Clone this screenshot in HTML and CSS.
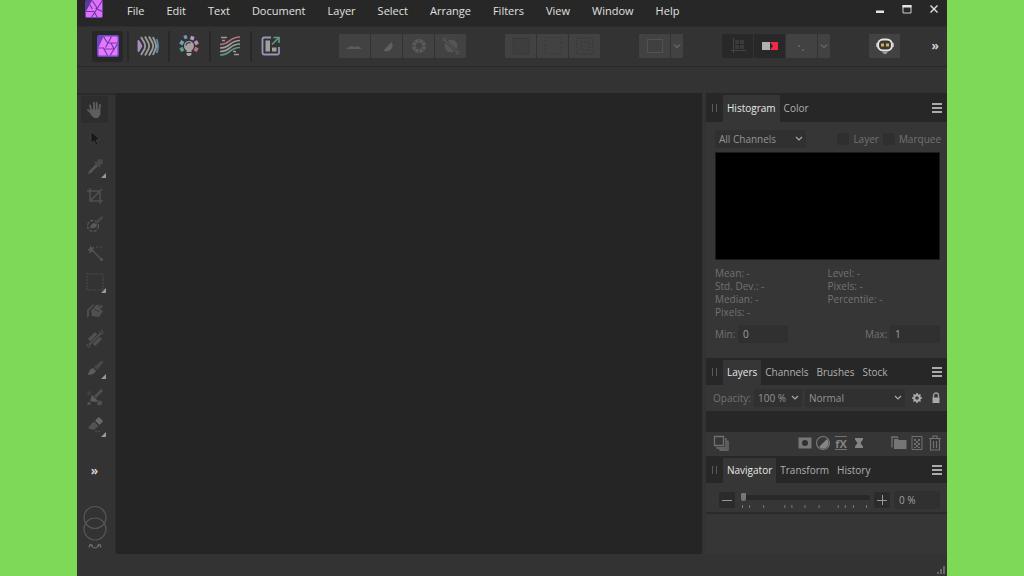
FILE: index.html
```html
<!DOCTYPE html>
<html lang="en">

<head>
    <meta charset="UTF-8">
    <meta name="viewport" content="width=device-width, initial-scale=1.0">
    <title>Photo Editor</title>
    <link rel="stylesheet" href="styles.css">
</head>

<body>
    <div class="app">
        <!-- Menu bar -->
        <header class="menubar">
            <svg class="logo" viewBox="0 0 22 22" width="18" height="18">
                <rect width="22" height="22" rx="2" fill="#5b3a9e"/>
                <path d="M9 0h11a1 1 0 0 1 1 1v19a1 1 0 0 1-1 1H2a1 1 0 0 1-1-1v-6z" fill="#e070f8"/>
                <path d="M9 1l6 9M1 14h10M21 1L8 21M21 14l-8-4M11 14l4 7M6 6l3 5" fill="none" stroke="#6a35a8" stroke-width="1.3"/>
            </svg>
            <nav class="menu">
                <a href="#">File</a>
                <a href="#">Edit</a>
                <a href="#">Text</a>
                <a href="#">Document</a>
                <a href="#">Layer</a>
                <a href="#">Select</a>
                <a href="#">Arrange</a>
                <a href="#">Filters</a>
                <a href="#">View</a>
                <a href="#">Window</a>
                <a href="#">Help</a>
            </nav>
            <div class="window-buttons">
                <button aria-label="Minimize"><svg viewBox="0 0 10 10" width="10" height="10"><path d="M1 6.5h8v2.5H1z" fill="#e4e4e4"/></svg></button>
                <button aria-label="Maximize"><svg viewBox="0 0 10 10" width="10" height="10"><path d="M1 1.5h8v7.5H1z" fill="none" stroke="#cfcfcf"/><path d="M.5 1h9v2.500h-9z" fill="#e4e4e4"/></svg></button>
                <button aria-label="Close"><svg viewBox="0 0 10 10" width="10" height="10"><path d="M1.500 1.500l7 7M8.500 1.500l-7 7" fill="none" stroke="#e4e4e4" stroke-width="1.400"/></svg></button>
            </div>
        </header>

        <!-- Toolbar -->
        <div class="toolbar">
            <div class="personas">
                <button class="persona active" aria-label="Photo Persona">
                    <svg viewBox="0 0 22 22" width="22" height="22">
                        <rect width="22" height="22" rx="2" fill="#6c45c0"/>
                        <path d="M6.500 1.500h13a1 1 0 0 1 1 1v17a1 1 0 0 1-1 1h-17a1 1 0 0 1-1-1v-7z" fill="#e579fa"/>
                        <path d="M6.500 1.500l4 6.500M14.500 1.500l-6 11M10.500 8h10M14 8l3 6M20.500 9l-7.500 11.500M17 14H6.500M1.500 13h5l4 7.500" fill="none" stroke="#7138b5" stroke-width="1.200"/>
                    </svg>
                </button>
                <button class="persona" aria-label="Liquify Persona">
                    <svg viewBox="0 0 22 22" width="22" height="22" fill="none" stroke-width="1.900">
                        <path d="M1.500 6l3 5-3 5z" fill="#a98cc0" stroke="#a98cc0" stroke-linejoin="round"/>
                        <path d="M4 2l3.500 6q1.500 3 0 6L4 20M8 1.500l3.500 6.500q1.500 3 0 6L8 20.500M12 1.500l3.500 6.500q1.500 3 0 6L12 20.500M16 2l2.500 6q1.500 3 0 6L16 20" stroke="#9a9a9a"/>
                        <path d="M19.500 4q3 7 0 14" stroke="#5c8ba6"/>
                    </svg>
                </button>
                <button class="persona" aria-label="Develop Persona">
                    <svg viewBox="0 0 22 22" width="22" height="22" fill="none" stroke-width="3.600">
                        <path d="M6 2.700l3-1.200" stroke="#7f8fc0"/>
                        <path d="M12.500 2.500l3.500 1.300" stroke="#b79ad0"/>
                        <path d="M2.800 9.500l2-3.500" stroke="#6aa5bb"/>
                        <path d="M19.300 9.500l-2-3.500" stroke="#c08bb0"/>
                        <path d="M3 12.500l1.800 3.800" stroke="#5c9c85"/>
                        <path d="M19 12.500l-1.800 3.800" stroke="#b8737a"/>
                        <circle cx="11" cy="11" r="5" fill="#a2a2a2" stroke="none"/>
                        <path d="M8 10.500a3 3 0 0 1 4.500-2.500" stroke="#393939" stroke-width="1.300"/>
                        <path d="M8.500 14h5v3h-5zM8.500 18h5v1.500l-1.500 1.500h-2l-1.500-1.500z" fill="#a2a2a2" stroke="none"/>
                    </svg>
                </button>
                <button class="persona" aria-label="Tone Mapping Persona">
                    <svg viewBox="0 0 22 22" width="22" height="22" fill="none" stroke-width="1.700">
                        <path d="M2 2.500h6M3 5.500h3M14 16.500h3M15 19.500h5" stroke="#9a9a9a"/>
                        <path d="M1 9.500c10 0 9-7.500 20-7.500" stroke="#b5737a"/>
                        <path d="M1 13c11 0 9-7.500 20-7.500M1 16.500c11 0 9-7.500 20-7.500" stroke="#999"/>
                        <path d="M1 20c11 0 9-7.500 20-7.500" stroke="#5f967b"/>
                    </svg>
                </button>
                <button class="persona" aria-label="Export Persona">
                    <svg viewBox="0 0 22 22" width="22" height="22" fill="none">
                        <path d="M11 2.500H4a1.500 1.500 0 0 0-1.500 1.500v14A1.500 1.500 0 0 0 4 19.500h13.500a1.500 1.500 0 0 0 1.500-1.500v-6" stroke="#9497b8" stroke-width="1.800"/>
                        <path d="M5.500 5.500h4.500v11H5.500zM12 12.500h4.500v4H12z" fill="#a0a0a0"/>
                        <path d="M12 9.500l6.500-6.500M13.500 2.500H19V8" stroke="#619a80" stroke-width="1.600"/>
                    </svg>
                </button>
            </div>

            <div class="groups">
                <div class="group">
                    <button aria-label="Auto Levels"><svg viewBox="0 0 18 18" width="18" height="18"><path d="M1 11l4-2 4 1 3-1 4 3H1z" fill="#5b5b5b"/></svg></button>
                    <button aria-label="Auto Contrast"><svg viewBox="0 0 18 18" width="18" height="18"><circle cx="9" cy="9" r="5.500" fill="#424242"/><path d="M13.500 5a6 6 0 0 1-8 8.500z" fill="#606060"/></svg></button>
                    <button aria-label="Auto Colors"><svg viewBox="0 0 18 18" width="18" height="18" fill="none"><circle cx="9" cy="9" r="5" stroke="#5b5b5b" stroke-width="4"/><path d="M9 2v4M9 12v4M2 9h4M12 9h4M4 4l3 3M14 4l-3 3M4 14l3-3M14 14l-3-3" stroke="#424242"/></svg></button>
                    <button aria-label="Auto White Balance"><svg viewBox="0 0 18 18" width="18" height="18" fill="none"><circle cx="9" cy="9" r="6.500" fill="#555"/><path d="M2 2l14 14" stroke="#424242" stroke-width="3"/><path d="M3 3l12 12" stroke="#5b5b5b"/><circle cx="2.500" cy="2.500" r="1.500" stroke="#5b5b5b"/><circle cx="15.500" cy="15.500" r="1.500" stroke="#5b5b5b"/></svg></button>
                </div>
                <div class="group">
                    <button aria-label="Select All"><svg viewBox="0 0 18 18" width="18" height="18"><rect x="1" y="1" width="16" height="16" fill="#3e3e3e" stroke="#363636" stroke-dasharray="2 1"/></svg></button>
                    <button aria-label="Deselect"><svg viewBox="0 0 18 18" width="18" height="18"><rect x="1" y="1" width="16" height="16" fill="none" stroke="#383838" stroke-dasharray="2 2"/></svg></button>
                    <button aria-label="Invert Selection"><svg viewBox="0 0 18 18" width="18" height="18" fill="none" stroke="#363636" stroke-dasharray="2 1"><rect x="1" y="1" width="16" height="16"/><rect x="5" y="5" width="8" height="8"/></svg></button>
                </div>
                <div class="group">
                    <button aria-label="Quick Mask"><svg viewBox="0 0 18 18" width="18" height="18"><rect x="1.500" y="2.500" width="15" height="13" fill="#404040" stroke="#525252"/></svg></button>
                    <button class="drop" aria-label="Quick Mask options"><svg viewBox="0 0 8 8" width="8" height="8"><path d="M1 2.500l3 3 3-3" fill="none" stroke="#858585"/></svg></button>
                </div>
                <div class="group">
                    <button class="dark" aria-label="Force Pixel Alignment"><svg viewBox="0 0 18 18" width="18" height="18"><path d="M4.500 1v15M2 13.500h15" stroke="#444" fill="none"/><path d="M6 3h4v4H6zM11 3h4v4h-4zM6 8h4v4H6zM11 8h4v4h-4z" fill="#3a3a3a"/></svg></button>
                    <button class="dark" aria-label="Snapping"><svg viewBox="0 0 18 10" width="18" height="10"><path d="M1 1h8v8H1z" fill="#b0b0b0"/><path d="M9 1h8v8H9l3-4z" fill="#f02b48"/></svg></button>
                    <button aria-label="Snapping Options"><svg viewBox="0 0 18 18" width="18" height="18"><path d="M5 8h2v2H5zM9 12h2v2H9z" fill="#5c5c5c"/></svg></button>
                    <button class="drop" aria-label="Snapping presets"><svg viewBox="0 0 8 8" width="8" height="8"><path d="M1 2.500l3 3 3-3" fill="none" stroke="#858585"/></svg></button>
                </div>
                <div class="group">
                    <button aria-label="Assistant">
                        <svg viewBox="0 0 18 18" width="18" height="18"><rect x="2" y="2.500" width="14" height="11" rx="5" fill="#3a3832" stroke="#e5e5e5" stroke-width="2"/><path d="M1 6v4M17 6v4" stroke="#d0d0d0" stroke-width="1.500"/><path d="M5 6.500h3v3H5zM10 6.500h3v3h-3z" fill="#d3ae52"/><path d="M6 15h6l-2 2H8z" fill="#999"/></svg>
                    </button>
                </div>
            </div>
            <button class="overflow" aria-label="More toolbar items">»</button>
        </div>

        <div class="context-bar"></div>

        <div class="workspace">
            <!-- Tools -->
            <aside class="tools">
                <div class="tool-list">
                    <button class="tool active" aria-label="View Tool"><svg viewBox="0 0 18 18" width="18" height="18" fill="none" stroke="#5e5e5e" stroke-width="1.900" stroke-linecap="round"><path d="M5.500 10L4 4.500M8 9V2M10.700 9V2M13 10l1-6M5.500 12L2 9"/><path d="M5.500 9.500h8v4l-2 2.500H8.500L5.500 13z" fill="#5e5e5e"/></svg></button>
                    <button class="tool" aria-label="Move Tool"><svg viewBox="0 0 18 18" width="18" height="18"><path d="M5 2.500v12l3-2.500 2 4 2-1-2-4 4-.5z" fill="#181818" stroke="#515151" stroke-width=".5"/></svg></button>
                    <button class="tool more" aria-label="Colour Picker Tool"><svg viewBox="0 0 18 18" width="18" height="18" fill="none"><path d="M2 16l1-3 7-7 2 2-7 7z" fill="#555"/><path d="M9 4l5 5M11.500 6.500l3-3" stroke="#4a4a4a" stroke-width="2"/><circle cx="14" cy="4" r="3" fill="#484848"/></svg></button>
                    <button class="tool" aria-label="Crop Tool"><svg viewBox="0 0 18 18" width="18" height="18" fill="none" stroke="#505050" stroke-width="1.500"><path d="M4 1v13h13M1 4h13v13M4 14L16 2"/></svg></button>
                    <button class="tool" aria-label="Selection Brush Tool"><svg viewBox="0 0 18 18" width="18" height="18"><circle cx="7" cy="11" r="5.500" fill="none" stroke="#5a5a5a" stroke-width="1.300" stroke-dasharray="3 1.500"/><path d="M4 13q1-5 5-5l2 2q-1 4-7 3z" fill="#595959"/><path d="M9 7l7-6q1.500 0 1 2l-6 6z" fill="#494949"/></svg></button>
                    <button class="tool" aria-label="Flood Select Tool"><svg viewBox="0 0 18 18" width="18" height="18"><path d="M4 1l1.500 2.500 3-.5L7 5.500 8.500 8l-3-.5L3.500 10V7L1 5.500l3-1z" fill="#555"/><path d="M6 6l9 9" stroke="#505050" stroke-width="1.500"/><circle cx="15.500" cy="15.500" r="1.500" fill="#555"/><path d="M10 3h2M14 3h2" stroke="#484848" stroke-width="1.500"/></svg></button>
                    <button class="tool more" aria-label="Marquee Tool"><svg viewBox="0 0 18 18" width="18" height="18"><rect x="1" y="1" width="16" height="16" fill="none" stroke="#4a4a4a" stroke-dasharray="2 1"/></svg></button>
                    <button class="tool" aria-label="Flood Fill Tool"><svg viewBox="0 0 18 18" width="18" height="18"><path d="M1 16V8l6-6 1 1-5 6v5z" fill="#4d4d4d"/><path d="M5 9l5-6q5-1 7 1-1 3-4 3l4 2-4 6-7-1z" fill="#505050"/><path d="M8 7l5 3M12 4h3" stroke="#353535" fill="none"/></svg></button>
                    <button class="tool" aria-label="Healing Tool"><svg viewBox="0 0 18 18" width="18" height="18"><path d="M2.500 9L9 2.500l2.500 2.500L5 11.500zM6.500 13L13 6.500 15.500 9 9 15.500z" fill="#525252" stroke="#525252" stroke-linejoin="round"/><path d="M3.500 14.500l11-11" stroke="#353535" stroke-width="3.200"/><path d="M3.500 14.500l11-11" stroke="#555" stroke-width="1.200"/><circle cx="15.500" cy="2.500" r="1.500" fill="none" stroke="#555"/><circle cx="2.500" cy="15.500" r="1.500" fill="none" stroke="#555"/></svg></button>
                    <button class="tool more" aria-label="Paint Brush Tool"><svg viewBox="0 0 18 18" width="18" height="18"><path d="M2 16q1-6 5-7l3 3q-2 4-8 4z" fill="#5c5c5c"/><path d="M8 8l7-6q2.500-.5 2 2l-6 7z" fill="#484848"/></svg></button>
                    <button class="tool" aria-label="Clone Brush Tool"><svg viewBox="0 0 18 18" width="18" height="18"><path d="M6 7l6 6-3 1-5-1 1-3z" fill="#5c5c5c"/><path d="M8 8l7-7 2 2-7 7z" fill="#505050"/><circle cx="3" cy="5" r="2" fill="#404040"/><circle cx="3" cy="15.500" r="1.800" fill="#525252"/><circle cx="13.500" cy="15" r="2.500" fill="#505050"/></svg></button>
                    <button class="tool more" aria-label="Erase Brush Tool"><svg viewBox="0 0 18 18" width="18" height="18"><path d="M9.500 4.500L13 1.500 16.500 5l-3 3.500z" fill="#686868" stroke="#686868" stroke-linejoin="round"/><path d="M8 5.500l4.500 4.500-4 3.500q-3.500 1-6-1.500 0-2 5.500-6.500z" fill="#525252"/><path d="M9 15.500h2M12 15.500h2" stroke="#484848" stroke-width="1.500"/></svg></button>
                </div>
                <button class="overflow" aria-label="More tools">»</button>
                <div class="swatches">
                    <svg viewBox="0 0 26 46" width="26" height="46" fill="none" stroke="#555" stroke-width="1.200">
                        <circle cx="13" cy="12.500" r="11"/>
                        <circle cx="13" cy="24" r="11"/>
                        <path d="M9 40.500q4 5 8 0M7 42.500l1-3 3 1M19 42.500l-1-3-3 1" stroke="#707070"/>
                    </svg>
                </div>
            </aside>

            <main class="canvas"></main>

            <!-- Studio panels -->
            <section class="studio">
                <div class="panel">
                    <div class="tabs">
                        <span class="grip"></span>
                        <button class="tab active">Histogram</button>
                        <button class="tab">Color</button>
                        <button class="panel-menu" aria-label="Histogram menu"></button>
                    </div>
                    <div class="histogram">
                        <div class="row channel-row">
                            <select class="channels" aria-label="Channels"><option>All Channels</option></select>
                            <label class="check"><input type="checkbox">Layer</label>
                            <label class="check"><input type="checkbox">Marquee</label>
                        </div>
                        <div class="graph"></div>
                        <div class="stats">
                            <div>
                                <p>Mean: -</p>
                                <p>Std. Dev.: -</p>
                                <p>Median: -</p>
                                <p>Pixels: -</p>
                            </div>
                            <div>
                                <p>Level: -</p>
                                <p>Pixels: -</p>
                                <p>Percentile: -</p>
                            </div>
                        </div>
                        <div class="row range-row">
                            <label>Min: <input type="text" value="0"></label>
                            <label>Max: <input type="text" value="1"></label>
                        </div>
                    </div>
                </div>

                <div class="panel">
                    <div class="tabs">
                        <span class="grip"></span>
                        <button class="tab active">Layers</button>
                        <button class="tab">Channels</button>
                        <button class="tab">Brushes</button>
                        <button class="tab">Stock</button>
                        <button class="panel-menu" aria-label="Layers menu"></button>
                    </div>
                    <div class="row blend-row">
                        <label for="opacity">Opacity:</label>
                        <select id="opacity"><option>100 %</option></select>
                        <select class="blend" aria-label="Blend mode"><option>Normal</option></select>
                        <button class="icon" aria-label="Blend options"><svg viewBox="0 0 12 12" width="12" height="12"><circle cx="6" cy="6" r="2.800" fill="none" stroke="#aaa" stroke-width="2"/><path d="M6 1v2M6 9v2M1 6h2M9 6h2M2.500 2.500l1.500 1.500M8 8l1.500 1.500M9.500 2.500L8 4M4 8L2.500 9.500" stroke="#aaa" stroke-width="1.600"/></svg></button>
                        <button class="icon" aria-label="Lock"><svg viewBox="0 0 12 12" width="12" height="12"><path d="M3.500 6V3.500a2.500 2.500 0 0 1 5 0V6" fill="none" stroke="#999" stroke-width="1.400"/><path d="M2.500 5.500h7V11h-7z" fill="#aaa"/></svg></button>
                    </div>
                    <div class="layer-list"></div>
                    <div class="layer-actions">
                        <button class="first" aria-label="Edit all layers"><svg viewBox="0 0 16 16" width="16" height="16" fill="none" stroke="#707070" stroke-width="1.300"><path d="M1.500 1.500h9v9h-9zM12 4h1v9H4v-1M14 6.500h1v8.500H7v-1"/></svg></button>
                        <div class="action-group">
                            <button aria-label="Mask Layer"><svg viewBox="0 0 16 16" width="16" height="16"><path d="M1.500 2.500h13v11h-13z" fill="#777"/><circle cx="8" cy="8" r="3" fill="#303030"/></svg></button>
                            <button aria-label="Adjustments"><svg viewBox="0 0 16 16" width="16" height="16"><circle cx="8" cy="8" r="6.500" fill="none" stroke="#777" stroke-width="1.200"/><path d="M12 4a5.500 5.500 0 0 1-8 8z" fill="#858585"/></svg></button>
                            <button class="fx" aria-label="Layer Effects">fX</button>
                            <button aria-label="Live Filters"><svg viewBox="0 0 16 16" width="16" height="16"><path d="M4 3h8v1.500L9.500 8l2.500 3.500V13H4v-1.500L6.500 8 4 4.500z" fill="#858585"/></svg></button>
                        </div>
                        <div class="action-group">
                            <button aria-label="Group Layer"><svg viewBox="0 0 16 16" width="16" height="16"><path d="M3 4h4l1 1h7.500v9H3z" fill="#757575"/><path d="M1 12.500V2h5l1 1" fill="none" stroke="#737373" stroke-width="1.300"/></svg></button>
                            <button aria-label="Add Pixel Layer"><svg viewBox="0 0 16 16" width="16" height="16"><path d="M3 1.500h10v13H3z" fill="none" stroke="#707070"/><path d="M5 4h2v2H5zM9 4h2v2H9zM7 6h2v2H7zM5 8h2v2H5zM9 8h2v2H9zM7 10h2v2H7zM5 12h2v1H5zM9 12h2v1H9z" fill="#707070"/></svg></button>
                            <button aria-label="Delete"><svg viewBox="0 0 16 16" width="16" height="16" fill="none" stroke="#707070" stroke-width="1.200"><path d="M2 3.500h12M6 3V1h4v2M3.500 4v11h9V4M6.500 6v7M9.500 6v7"/></svg></button>
                        </div>
                    </div>
                </div>

                <div class="panel navigator">
                    <div class="tabs">
                        <span class="grip"></span>
                        <button class="tab active">Navigator</button>
                        <button class="tab">Transform</button>
                        <button class="tab">History</button>
                        <button class="panel-menu" aria-label="Navigator menu"></button>
                    </div>
                    <div class="row zoom-row">
                        <button class="step" aria-label="Zoom out"><svg viewBox="0 0 12 12" width="12" height="12"><path d="M1 6.500h10" stroke="#999"/></svg></button>
                        <div class="zoom-slider">
                            <input type="range" min="0" max="100" value="0" aria-label="Zoom">
                            <svg class="ticks" viewBox="0 0 128 3" height="3" preserveAspectRatio="none"><path d="M1 0h1v3H1zM8 0h1v3H8zM22 0h1v3h-1zM43 0h1v3h-1zM50 0h1v3h-1zM63 0h1v3h-1zM77 0h1v3h-1zM96 0h1v3h-1zM103 0h1v3h-1zM111 0h1v3h-1zM124 0h1v3h-1z" fill="#787878"/></svg>
                        </div>
                        <button class="step" aria-label="Zoom in"><svg viewBox="0 0 12 12" width="12" height="12"><path d="M1 6.500h10M6.500 1v10" stroke="#999"/></svg></button>
                        <input class="zoom-value" type="text" value="0 %" aria-label="Zoom level">
                    </div>
                </div>
            </section>
        </div>

        <footer class="statusbar">
            <svg viewBox="0 0 8 8" width="8" height="8"><path d="M6 0h2v8H6zM3 3h2v5H3zM0 6h2v2H0z" fill="#686868"/></svg>
        </footer>
    </div>
</body>

</html>
```

FILE: styles.css
```css
* {
    box-sizing: border-box;
}

body {
    margin: 0;
    padding: 0 77px;
    background-color: #7ed957;
    font-family: "Open Sans", "Noto Sans", sans-serif;
    font-size: 10px;
    color: #8c8c8c;
}

button,
input,
select {
    margin: 0;
    padding: 0;
    border: none;
    background: none;
    font: inherit;
    color: inherit;
}

button {
    display: flex;
    align-items: center;
    justify-content: center;
}

svg {
    display: block;
}

p {
    margin: 0;
}

.app {
    display: flex;
    flex-direction: column;
    min-height: 100vh;
    background-color: #333;
}

/* Menu bar */
.menubar {
    display: flex;
    height: 26px;
    padding: 0 8px;
    background-color: #272727;
}

.menu {
    display: flex;
    gap: 22px;
    margin-left: 24px;
    line-height: 22px;
    font-size: 11px;
}

.menu a {
    color: #e0e0e0;
    text-decoration: none;
}

.window-buttons {
    display: flex;
    gap: 17px;
    height: 17px;
    margin-left: auto;
}

/* Toolbar */
.toolbar {
    display: flex;
    align-items: center;
    height: 41px;
    padding: 0 4px 1px 15px;
    border-top: 1px solid #2d2d2d;
    border-bottom: 1px solid #282828;
}

.personas {
    display: flex;
}

.persona {
    width: 31px;
    height: 31px;
    border-radius: 2px;
}

.persona + .persona {
    width: 41px;
    padding-right: 1px;
    border-left: 2px solid #292929;
    border-radius: 0;
}

.persona.active {
    margin-right: 4px;
    background-color: #272727;
}

.groups {
    display: flex;
    gap: 39px;
    margin-left: 48px;
}

.group {
    display: flex;
    gap: 1px;
}

.group button {
    width: 31px;
    height: 24px;
    border-radius: 1px;
    background-color: #424242;
}

.group .drop {
    width: 12px;
}

.group .dark {
    background-color: #282828;
}

.overflow {
    padding: 0 4px;
    font-size: 12px;
    font-weight: bold;
    line-height: 16px;
    color: #d0d0d0;
}

.toolbar .overflow {
    margin-left: auto;
}

.context-bar {
    height: 26px;
}

/* Workspace */
.workspace {
    display: flex;
    flex: 1;
}

.tools {
    display: flex;
    flex-direction: column;
    align-items: center;
    width: 39px;
    padding: 1px 3px 0 0;
    border-top: 2px solid #2a2a2a;
    border-right: 1px solid #2c2c2c;
}

.tool-list {
    display: flex;
    flex-direction: column;
    justify-content: space-between;
    height: 343px;
}

.tool {
    position: relative;
    width: 27px;
    height: 27px;
    border-radius: 2px;
}

.tool.active {
    background-color: #2d2d2d;
}

.tool.more::after {
    content: "";
    position: absolute;
    right: 2px;
    bottom: 2px;
    border-left: 5px solid transparent;
    border-bottom: 5px solid #999;
}

.tools .overflow {
    margin-top: 24px;
}

.swatches {
    margin-top: 26px;
}

.canvas {
    flex: 1;
    background-color: #252525;
}

/* Studio panels */
.studio {
    display: flex;
    flex-direction: column;
    width: 245px;
    padding-left: 4px;
}

.panel {
    background-color: #363636;
}

.navigator {
    flex: 1;
}

.tabs {
    display: flex;
    height: 27px;
    padding: 2px 5px 0 6px;
    background-color: #272727;
}

.panel:first-child .tabs {
    height: 29px;
}

.grip {
    align-self: center;
    width: 5px;
    height: 8px;
    margin: 0 6px 2px 0;
    border: solid #5a5a5a;
    border-width: 0 1px;
}

.tab {
    padding: 0 4px 2px;
    color: #b0b0b0;
}

.tab.active {
    background-color: #363636;
    color: #e8e8e8;
}

.panel-menu {
    align-self: center;
    width: 10px;
    height: 10px;
    margin: 0 0 2px auto;
    border: solid #aaa;
    border-width: 2px 0;
    background: linear-gradient(#aaa, #aaa) center / 10px 2px no-repeat;
}

.row {
    display: flex;
    align-items: center;
}

select {
    appearance: none;
    height: 18px;
    padding: 0 4px;
    border-radius: 2px;
    background: #303030 url("data:image/svg+xml,%3Csvg xmlns='http://www.w3.org/2000/svg' width='8' height='8'%3E%3Cpath d='M1 2l3 3 3-3' fill='none' stroke='%23aaa' stroke-width='1.2'/%3E%3C/svg%3E") right 3px center no-repeat;
    color: #949494;
}

input[type="text"] {
    width: 50px;
    height: 18px;
    padding: 0 5px;
    border-radius: 2px;
    background-color: #303030;
    color: #a0a0a0;
}

.histogram {
    padding: 8px 7px 15px 9px;
    color: #727272;
}

.channel-row {
    gap: 4px;
    margin-right: -1px;
}

.channels {
    width: 91px;
    margin-right: auto;
}

.check {
    display: flex;
    align-items: center;
    gap: 4px;
}

.check input {
    appearance: none;
    width: 12px;
    height: 12px;
    border-radius: 2px;
    background-color: #2f2f2f;
}

.graph {
    height: 108px;
    margin-top: 4px;
    border: 1px solid #1c1c1c;
    background-color: #000;
}

.stats {
    display: grid;
    grid-template-columns: 1fr 1fr;
    margin-top: 7px;
    line-height: 13px;
}

.range-row {
    justify-content: space-between;
    margin-top: 6px;
}

.blend-row {
    gap: 3px;
    height: 26px;
    padding: 0 5px 0 7px;
}

.blend-row label {
    color: #727272;
}

.blend-row select {
    width: 48px;
}

.blend-row .blend {
    flex: 1;
}

.icon {
    width: 17px;
}

.icon:last-child {
    width: 12px;
    margin-left: 2px;
}

.layer-list {
    height: 21px;
    background-color: #272727;
}

.layer-actions {
    display: flex;
    align-items: center;
    gap: 22px;
    height: 24px;
    padding: 0 3px 2px 7px;
}

.layer-actions .first {
    margin-right: auto;
}

.action-group {
    display: flex;
    align-items: center;
}

.action-group button {
    width: 18px;
    height: 16px;
}

.action-group .fx {
    width: 12px;
    height: 14px;
    margin: 0 3px;
    border: solid #707070;
    border-width: 1px 0;
    font-size: 11px;
    font-weight: bold;
    color: #858585;
}

.zoom-row {
    gap: 4px;
    height: 31px;
    padding: 4px 7px 0 13px;
    border-bottom: 2px solid #2b2b2b;
}

.step {
    width: 16px;
    height: 16px;
    border-radius: 2px;
    background-color: #2b2b2b;
}

.zoom-slider {
    flex: 1;
    padding: 1px 0 0 2px;
}

.zoom-slider input {
    display: block;
    appearance: none;
    width: 100%;
    height: 10px;
}

.zoom-slider input::-webkit-slider-runnable-track {
    height: 5px;
    border-radius: 2px;
    background-color: #292929;
}

.zoom-slider input::-webkit-slider-thumb {
    appearance: none;
    width: 5px;
    height: 8px;
    margin-top: -2px;
    border-radius: 1px 1px 3px 3px;
    background-color: #777;
}

.ticks {
    width: 100%;
    margin-top: 2px;
}

.zoom-row .zoom-value {
    width: 46px;
}

/* Status bar */
.statusbar {
    display: flex;
    align-items: flex-end;
    justify-content: flex-end;
    height: 22px;
    padding: 0 2px 2px 0;
}
```
